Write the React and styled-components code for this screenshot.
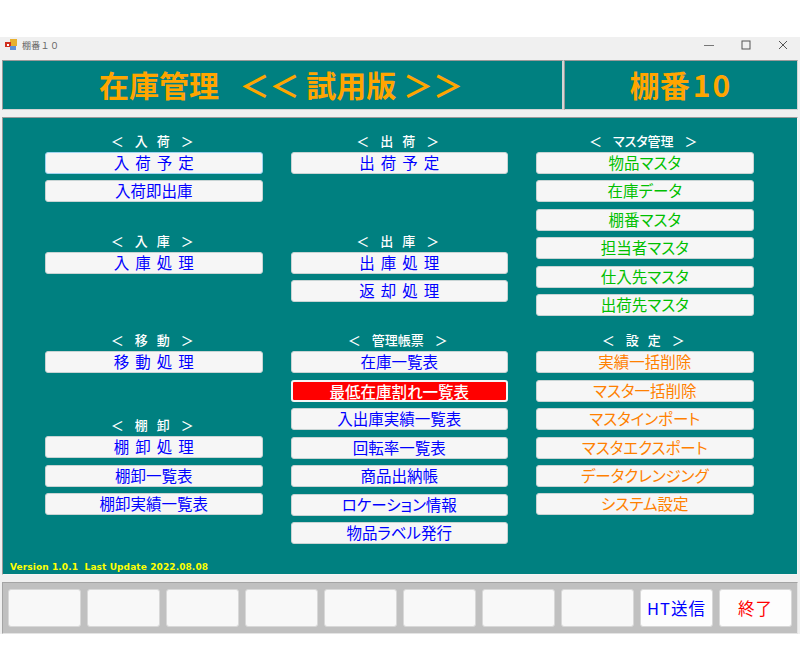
import React from "react";
import styled, { createGlobalStyle } from "styled-components";

const GlobalStyle = createGlobalStyle`
  html, body { margin: 0; padding: 0; background: #fff; }
  body { font-family: "Noto Sans CJK JP", "Liberation Sans", sans-serif; }
`;

const columns = [
  [
    { title: "入   荷", top: 0, items: [{ label: "入 荷 予 定", focus: true }, { label: "入荷即出庫" }] },
    { title: "入   庫", top: 31, items: [{ label: "入 庫 処 理" }] },
    { title: "移   動", top: 58, items: [{ label: "移 動 処 理" }] },
    { title: "棚   卸", top: 44, items: [{ label: "棚 卸 処 理" }, { label: "棚卸一覧表" }, { label: "棚卸実績一覧表" }] },
  ],
  [
    { title: "出   荷", top: 0, items: [{ label: "出 荷 予 定" }] },
    { title: "出   庫", top: 59, items: [{ label: "出 庫 処 理" }, { label: "返 却 処 理" }] },
    {
      title: "管理帳票",
      top: 30,
      items: [
        { label: "在庫一覧表" },
        { label: "最低在庫割れ一覧表", alert: true },
        { label: "入出庫実績一覧表" },
        { label: "回転率一覧表" },
        { label: "商品出納帳" },
        { label: "ロケーション情報" },
        { label: "物品ラベル発行" },
      ],
    },
  ],
  [
    {
      title: "マスタ管理",
      top: 0,
      color: "#00c000",
      items: ["物品マスタ", "在庫データ", "棚番マスタ", "担当者マスタ", "仕入先マスタ", "出荷先マスタ"].map((label) => ({ label })),
    },
    {
      title: "設   定",
      top: 16,
      color: "#ff8000",
      items: ["実績一括削除", "マスタ一括削除", "マスタインポート", "マスタエクスポート", "データクレンジング", "システム設定"].map((label) => ({ label })),
    },
  ],
];

const Page = styled.div`
  width: 800px;
  height: 672px;
  padding-top: 37px;
  box-sizing: border-box;
  overflow: hidden;
`;

const Window = styled.div`
  height: 597px;
  background: #f0f0f0;
  display: flex;
  flex-direction: column;
`;

const TitleBar = styled.div`
  height: 23px;
  box-sizing: border-box;
  padding: 0 0 7px 5px;
  display: flex;
  align-items: center;
  font-size: 9px;
  color: #666;
`;

const AppName = styled.span`
  margin-left: 5px;
  letter-spacing: 0.3px;
  flex: 1;
`;

const WinButton = styled.div`
  width: 37px;
  box-sizing: border-box;
  padding-left: 3px;
  display: flex;
  align-items: center;
  justify-content: center;
`;

const HeaderRow = styled.div`
  height: 50px;
  margin: 0 2px;
  display: flex;
  background: #d4d4d4;
`;

const HeaderCell = styled.div`
  flex: ${(p) => (p.$wide ? "1" : "0 0 234px")};
  box-sizing: border-box;
  background: #008080;
  border-top: 1px solid #9a9a9a;
  border-left: 1px solid #9a9a9a;
  border-bottom: 1px solid #d4d4d4;
  border-right: ${(p) => (p.$wide ? "2px" : "1px")} solid #d4d4d4;
  padding: ${(p) => (p.$wide ? "0 3px 2px 0" : "0 0 2px")};
  color: #ffa500;
  font-size: 30px;
  font-weight: 700;
  display: flex;
  align-items: center;
  justify-content: center;
  white-space: pre;
`;

const Digits = styled.span`
  letter-spacing: 2px;
  margin-left: 3px;
`;

const Main = styled.div`
  height: 458px;
  margin: 7px 2px 0;
  box-sizing: border-box;
  background: #008080;
  border-top: 1px solid #9a9a9a;
  border-left: 1px solid #9a9a9a;
  border-bottom: 1px solid #f4f4f4;
  border-right: 1px solid #f4f4f4;
  padding: 15px 43px 0 42px;
  display: flex;
  gap: 28px;
  position: relative;
`;

const Column = styled.div`
  width: 217.5px;
  flex: none;
  display: flex;
  flex-direction: column;
`;

const Section = styled.section`
  margin-top: ${(p) => p.$top}px;
  display: flex;
  flex-direction: column;
`;

const SectionTitle = styled.div`
  height: 19px;
  line-height: 15px;
  padding-right: 3px;
  display: flex;
  justify-content: center;
  gap: 11px;
  color: #fff;
  font-size: 13px;
  font-weight: 500;
  white-space: pre;
`;

const TitleText = styled.span`
  font-feature-settings: "palt";
`;

const ButtonStack = styled.div`
  display: flex;
  flex-direction: column;
  gap: 6.45px;
`;

const MenuButton = styled.button`
  height: 22px;
  padding: 0 0 2px;
  box-sizing: border-box;
  border-radius: 3px;
  border: ${(p) => (p.$alert ? "2px solid #f5f5f5" : p.$focus ? "1px solid #9fd4f0" : "1px solid #c8d4d4")};
  background: ${(p) => (p.$alert ? "#ff0000" : "#f6f6f6")};
  color: ${(p) => (p.$alert ? "#fff" : p.$color || "#0000ff")};
  font-family: inherit;
  font-size: 15.5px;
  font-weight: ${(p) => (p.$alert ? 500 : 400)};
  font-feature-settings: "palt";
  word-spacing: 2.5px;
  line-height: 18px;
  text-align: center;
  white-space: pre;
`;

const Version = styled.div`
  position: absolute;
  left: 7px;
  bottom: 2px;
  color: #ffff00;
  font-family: "DejaVu Sans", sans-serif;
  font-size: 9px;
  font-weight: 700;
  letter-spacing: 0.1px;
  white-space: pre;
`;

const FootBar = styled.div`
  height: 52px;
  margin: 7px 2px 0;
  box-sizing: border-box;
  background: #c0c0c0;
  border-top: 1px solid #a4a4a4;
  border-left: 1px solid #a4a4a4;
  border-bottom: 1px solid #e4e4e4;
  border-right: 1px solid #e4e4e4;
  padding: 6px 5px;
  display: flex;
  gap: 6px;
`;

const FootKey = styled.button`
  width: 73px;
  flex: none;
  padding: 0;
  border: 1px solid #d8d8d8;
  border-radius: 3px;
  background: ${(p) => (p.$label ? "#fdfdfd" : "#f8f8f8")};
  color: ${(p) => p.$color || "#0000ff"};
  font-family: inherit;
  font-size: 16.5px;
  letter-spacing: 1px;
`;

const AppIcon = () => (
  <svg width="12" height="12" viewBox="0 0 12 12">
    <rect x="5" y="0" width="7" height="7" fill="#e8b030" />
    <rect x="0" y="3" width="6" height="5" fill="#d03020" />
    <rect x="5" y="7" width="6" height="4" fill="#6090d8" />
    <rect x="2" y="5" width="2" height="2" fill="#fff" />
  </svg>
);

const App = () => (
  <>
    <GlobalStyle />
    <Page>
      <Window>
        <TitleBar>
          <AppIcon />
          <AppName>棚番１０</AppName>
          <WinButton>
            <svg width="10" height="10" viewBox="0 0 10 10"><path d="M0 5.5h10" stroke="#777" /></svg>
          </WinButton>
          <WinButton>
            <svg width="10" height="10" viewBox="0 0 10 10"><rect x="1" y="1" width="8" height="8" fill="none" stroke="#555" /></svg>
          </WinButton>
          <WinButton>
            <svg width="10" height="10" viewBox="0 0 10 10"><path d="M1 1l8 8M9 1l-8 8" stroke="#555" /></svg>
          </WinButton>
        </TitleBar>

        <HeaderRow>
          <HeaderCell $wide>{"在庫管理   ＜＜ 試用版 ＞＞"}</HeaderCell>
          <HeaderCell>棚番<Digits>10</Digits></HeaderCell>
        </HeaderRow>

        <Main>
          {columns.map((sections, i) => (
            <Column key={i}>
              {sections.map((section) => (
                <Section key={section.title} $top={section.top}>
                  <SectionTitle>
                    <span>＜</span>
                    <TitleText>{section.title}</TitleText>
                    <span>＞</span>
                  </SectionTitle>
                  <ButtonStack>
                    {section.items.map((item) => (
                      <MenuButton key={item.label} $alert={item.alert} $focus={item.focus} $color={section.color}>
                        {item.label}
                      </MenuButton>
                    ))}
                  </ButtonStack>
                </Section>
              ))}
            </Column>
          ))}
          <Version>{"Version 1.0.1  Last Update 2022.08.08"}</Version>
        </Main>

        <FootBar>
          {Array.from({ length: 8 }).map((_, i) => (
            <FootKey key={i} />
          ))}
          <FootKey $label>HT送信</FootKey>
          <FootKey $label $color="#ff0000">終了</FootKey>
        </FootBar>
      </Window>
    </Page>
  </>
);

export default App;
